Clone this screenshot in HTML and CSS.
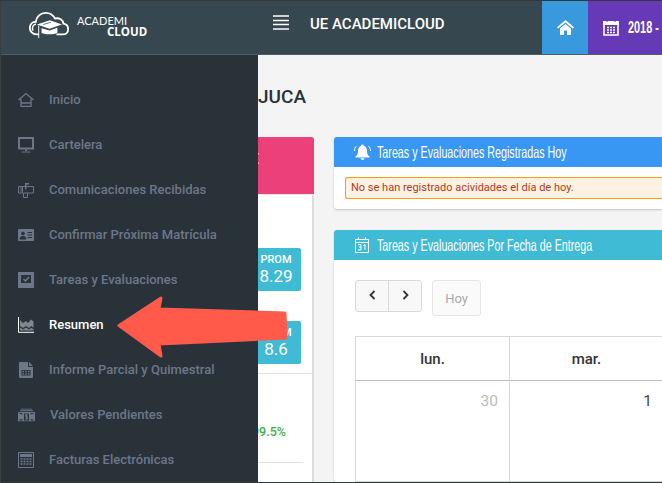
FILE: index.html
```html
<!DOCTYPE html>
<html lang="es">
<head>
    <meta charset="UTF-8">
    <meta name="viewport" content="width=device-width, initial-scale=1.0">
    <title>UE AcademiCloud</title>
    <link rel="stylesheet" href="styles.css">
</head>
<body>
    <div class="app">
        <header class="topbar">
            <div class="brand">
                <svg class="brand-logo" width="42" height="28" viewBox="0 0 44 30">
                    <path d="M11 25H9C4 25 1.500 21.500 1.500 18C1.500 14 4.500 11.500 8 11.500C8.500 6 13 2 18.500 2C23 2 26.500 4.500 28.500 8C33 7 37 9.500 37.500 13.500C40.500 14 42.500 16.500 42.500 19.500C42.500 23 40 25 37 25H30" fill="none" stroke="#fff" stroke-width="2"/>
                    <path d="M5 21C3.500 18 4.500 14.500 8 14" fill="none" stroke="#fff" stroke-width="1.500"/>
                    <path d="M9 14.500L23 10L36 14.500L22.500 19Z" fill="#fff"/>
                    <path d="M14 18.500V23.500C18 25.500 27 25.500 31 23.500V18L22.500 21Z" fill="#fff"/>
                    <path d="M11 15.500V29" stroke="#fff" stroke-width="1"/>
                    <path d="M16 14.500L24 12" stroke="#37474f" stroke-width="0.800"/>
                </svg>
                <div class="brand-text">
                    <span class="brand-top">ACADEMI</span>
                    <span class="brand-bottom">CLOUD</span>
                </div>
            </div>
            <svg class="menu-icon" width="16" height="15" viewBox="0 0 16 15">
                <path d="M0 1H16M0 5.500H16M0 9.500H16M0 14H16" stroke="#fff" stroke-width="1.600"/>
            </svg>
            <div class="school-name">UE ACADEMICLOUD</div>
            <a class="top-btn top-home">
                <svg width="17" height="15" viewBox="0 0 17 15">
                    <path d="M8.500 0L17 7.200L15.800 8.500L8.500 2.400L1.200 8.500L0 7.200Z" fill="#fff"/>
                    <path d="M3 8.500L8.500 4L14 8.500V15H10V10.500H7V15H3Z" fill="#fff"/>
                </svg>
            </a>
            <a class="top-btn top-period">
                <svg width="16" height="17" viewBox="0 0 16 17">
                    <path d="M1 3H15V16H1Z" fill="none" stroke="#fff" stroke-width="1.600"/>
                    <path d="M0 2H16V6H0Z" fill="#fff"/>
                    <path d="M4 0.500V3M12 0.500V3" stroke="#6639b6" stroke-width="1"/>
                    <path d="M4 8.500H6M7 8.500H9M10 8.500H12M4 11H6M7 11H9M10 11H12M4 13.500H6M7 13.500H9M10 13.500H12" stroke="#fff" stroke-width="1.400"/>
                </svg>
                <span class="narrow">2018 -</span>
            </a>
        </header>

        <div class="layout">
            <aside class="sidebar">
                <a class="nav-item">
                    <svg width="16" height="15" viewBox="0 0 16 15"><path d="M0.500 7.500L8 1L15.500 7.500M3 6.500V13.800H13V6.500M3 10.500H13" fill="none" stroke="currentColor" stroke-width="1.300"/></svg>
                    Inicio
                </a>
                <a class="nav-item">
                    <svg width="16" height="16" viewBox="0 0 16 16"><path d="M1 1H15V11.500H1Z" fill="none" stroke="currentColor" stroke-width="2"/><path d="M7 12.500H9V14H7ZM3.500 14.500H12.500V15.500H3.500Z" fill="currentColor"/></svg>
                    Cartelera
                </a>
                <a class="nav-item">
                    <svg width="16" height="16" viewBox="0 0 16 16"><path d="M0.500 4.500H4.500V11H0.500ZM4.500 4.500H15.500V11H5.500M5.500 11V15.500H9.500V11M3 5V10" fill="none" stroke="currentColor" stroke-width="1"/><path d="M7 1H11V2.500H8.500V7.500H7Z" fill="currentColor"/></svg>
                    Comunicaciones Recibidas
                </a>
                <a class="nav-item">
                    <svg width="16" height="12" viewBox="0 0 16 12"><path d="M1 0H15Q16 0 16 1V11Q16 12 15 12H1Q0 12 0 11V1Q0 0 1 0Z" fill="currentColor"/><circle cx="5" cy="4.500" r="1.800" fill="#293239"/><path d="M2 10C2 6.500 8 6.500 8 10ZM9.500 3.500H14M9.500 6H14M9.500 8.500H14" fill="#293239" stroke="#293239" stroke-width="1"/></svg>
                    Confirmar Próxima Matrícula
                </a>
                <a class="nav-item">
                    <svg width="16" height="16" viewBox="0 0 16 16"><path d="M0 0H16V16H0ZM3 3V11H13V3Z" fill="currentColor" fill-rule="evenodd"/><path d="M5.500 7L7.500 9L11 5" fill="none" stroke="currentColor" stroke-width="1.500"/></svg>
                    Tareas y Evaluaciones
                </a>
                <a class="nav-item nav-active">
                    <svg width="16" height="16" viewBox="0 0 16 16"><path d="M2 9V3L5 6L8 4L10 6L13 2.500L15.500 4.500V10.500L13 9L11 11L8 9L5 11Z" fill="#7d8792"/><path d="M2 10.500L5 12.500L8 10.500L11 12.500L13 11L15.500 12V13.500H2Z" fill="#7d8792"/><path d="M0.500 0V15.300H16" fill="none" stroke="#fff" stroke-width="1"/></svg>
                    Resumen
                </a>
                <a class="nav-item">
                    <svg width="16" height="16" viewBox="0 0 16 16"><path d="M1 1Q1 0 2 0H10V5H15V15Q15 16 14 16H2Q1 16 1 15Z" fill="currentColor"/><path d="M11 0L15 4H11Z" fill="currentColor"/><path d="M3.500 8H12.500V13.500H3.500Z" fill="#293239"/><path d="M4.500 9.500H6M7.200 9.500H8.800M10 9.500H11.500M4.500 12H6M7.200 12H8.800M10 12H11.500" stroke="currentColor" stroke-width="1.400"/></svg>
                    Informe Parcial y Quimestral
                </a>
                <a class="nav-item">
                    <svg width="17" height="13" viewBox="0 0 17 13"><path d="M3 0.500H14M2 2.200H15" stroke="currentColor" stroke-width="1"/><path d="M0 3.500H17V13H0Z" fill="currentColor"/><path d="M1.500 5H4V6M15.500 5H13V6M1.500 11.500H4V10.500M15.500 11.500H13V10.500" fill="none" stroke="#293239" stroke-width="1"/><path d="M6 5H11V12H6Z" fill="#293239"/><path d="M10 6.300H7.500V8.200H9.500V10.300H7M8.500 5.500V11.200" fill="none" stroke="currentColor" stroke-width="0.900"/></svg>
                    <span class="nav-offset">Valores Pendientes</span>
                </a>
                <a class="nav-item">
                    <svg width="16" height="16" viewBox="0 0 16 16"><path d="M0.500 0.500H15.500V15.500H0.500Z" fill="none" stroke="currentColor" stroke-width="1"/><path d="M2 2H14V5H2Z" fill="currentColor"/><path d="M2.500 7H4.500M5.500 7H7.500M8.500 7H10.500M11.500 7H13.500M2.500 9.500H4.500M5.500 9.500H7.500M8.500 9.500H10.500M11.500 9.500H13.500M2.500 12H4.500M5.500 12H7.500M8.500 12H10.500M11.500 12H13.500" stroke="currentColor" stroke-width="1.600"/></svg>
                    Facturas Electrónicas
                </a>
            </aside>

            <main class="content">
                <h2 class="page-title">JUCA</h2>
                <div class="columns">
                    <section class="student-card">
                        <div class="student-head"><span>E</span></div>
                        <div class="student-body">
                            <div class="tile">
                                <span class="tile-label">PROM</span>
                                <span class="tile-value">8.29</span>
                            </div>
                            <div class="tile">
                                <span class="tile-label">PROM</span>
                                <span class="tile-value">8.6</span>
                            </div>
                            <div class="student-stat"><span>99.5%</span></div>
                        </div>
                    </section>

                    <div class="panels">
                        <section class="panel">
                            <div class="panel-head head-blue">
                                <svg width="17" height="16" viewBox="0 0 17 16">
                                    <path d="M8.500 0.500C9.300 0.500 9.800 1 9.800 1.800C12 2.500 13 4.500 13 7C13 10 14 11.500 15.500 12.500V13.500H1.500V12.500C3 11.500 4 10 4 7C4 4.500 5 2.500 7.200 1.800C7.200 1 7.700 0.500 8.500 0.500Z" fill="#fff"/>
                                    <path d="M6.500 14.300H10.500C10.300 15.300 9.500 16 8.500 16C7.500 16 6.700 15.300 6.500 14.300Z" fill="#fff"/>
                                    <path d="M2.500 2C1 3.500 0.500 5 0.500 7M14.500 2C16 3.500 16.500 5 16.500 7" fill="none" stroke="#fff" stroke-width="1"/>
                                </svg>
                                <span class="narrow">Tareas y Evaluaciones Registradas Hoy</span>
                            </div>
                            <div class="panel-body">
                                <div class="alert">No se han registrado acividades el día de hoy.</div>
                            </div>
                        </section>

                        <section class="panel">
                            <div class="panel-head head-teal">
                                <svg class="teal-icon" width="14" height="16" viewBox="0 0 14 16">
                                    <path d="M0.500 2.500H13.500V15.500H0.500ZM0.500 5.500H13.500M3.500 0.500V3M10.500 0.500V3" fill="none" stroke="#fff" stroke-width="1"/>
                                    <path d="M3 7.500H6V10H4M6 10V13H3M8.500 8.500L10 7.500V13" fill="none" stroke="#fff" stroke-width="1"/>
                                </svg>
                                <span class="narrow">Tareas y Evaluaciones Por Fecha de Entrega</span>
                            </div>
                            <div class="calendar">
                                <div class="cal-toolbar">
                                    <div class="cal-nav">
                                        <button class="cal-btn">
                                            <svg width="7" height="10" viewBox="0 0 7 10"><path d="M5.500 1L1.500 5L5.500 9" fill="none" stroke="#333" stroke-width="1.800"/></svg>
                                        </button>
                                        <button class="cal-btn">
                                            <svg width="7" height="10" viewBox="0 0 7 10"><path d="M1.500 1L5.500 5L1.500 9" fill="none" stroke="#333" stroke-width="1.800"/></svg>
                                        </button>
                                    </div>
                                    <button class="cal-today">Hoy</button>
                                </div>
                                <div class="cal-grid">
                                    <div class="cal-day">lun.</div>
                                    <div class="cal-day">mar.</div>
                                    <div class="cal-cell cal-muted">30</div>
                                    <div class="cal-cell">1</div>
                                </div>
                            </div>
                        </section>
                    </div>
                </div>
            </main>
        </div>

        <svg class="arrow" width="176" height="64" viewBox="0 0 176 64">
            <path d="M2 29.500L44 2L42 13L168 17L169 42L42 48L44 60Z" fill="#ff5a4a" stroke="#ff5a4a" stroke-width="3" stroke-linejoin="round"/>
        </svg>
    </div>
</body>
</html>
```

FILE: styles.css
```css
* {
    box-sizing: border-box;
}

html, body {
    margin: 0;
    padding: 0;
    height: 100%;
    overflow: hidden;
}

body {
    font-family: Roboto, 'Liberation Sans', sans-serif;
    background-color: #f4f4f4;
}

.app {
    position: relative;
    display: flex;
    flex-direction: column;
    width: 662px;
    height: 483px;
    overflow: hidden;
    border-top: 1px solid #33383b;
    border-bottom: 1px solid #33383b;
    border-left: 1px solid #3a3f42;
}

/* letra condensada de los titulos */
.narrow {
    display: inline-block;
    flex: none;
    font-family: 'Liberation Sans', sans-serif;
    transform: scaleX(0.65);
    transform-origin: left center;
    white-space: nowrap;
}

/* barra superior */
.topbar {
    display: flex;
    align-items: center;
    flex: 0 0 54px;
    background-color: #37474f;
    border-bottom: 1px solid #4d5d65;
    color: #fff;
}

.brand {
    display: flex;
    align-items: flex-start;
    width: 272px;
    height: 100%;
    padding: 10px 0 0 27px;
}

.brand-logo {
    flex: none;
}

.brand-text {
    display: flex;
    flex-direction: column;
    margin: 4px 0 0 7px;
    line-height: 11px;
}

.brand-top {
    font-family: Lato, sans-serif;
    font-size: 11px;
}

.brand-bottom {
    margin-left: 30px;
    font-family: 'Open Sans', sans-serif;
    font-size: 11.500px;
    font-weight: 700;
}

.menu-icon {
    flex: none;
    margin-top: -10px;
}

.school-name {
    flex: 1;
    margin: -8px 0 0 21px;
    font-size: 15px;
    font-weight: 500;
}

.top-btn {
    display: flex;
    align-items: center;
    height: 53px;
}

.top-home {
    justify-content: center;
    width: 46px;
    background-color: #3899dc;
}

.top-period {
    gap: 9px;
    width: 74px;
    padding-left: 15px;
    background-color: #6639b6;
    font-size: 16px;
    font-weight: 700;
}

.top-period svg {
    flex: none;
}

.top-period .narrow {
    font-weight: 700;
    transform: scaleX(0.68);
}

/* menu lateral */
.layout {
    display: flex;
    flex: 1;
    min-height: 0;
}

.sidebar {
    flex: 0 0 257px;
    padding-top: 22px;
    background-color: #293239;
}

.nav-item {
    display: flex;
    align-items: center;
    position: relative;
    height: 45px;
    padding-left: 48px;
    color: #6d778a;
    font-size: 13px;
    font-weight: 500;
    white-space: nowrap;
}

.nav-item svg {
    position: absolute;
    left: 17px;
    top: 50%;
    transform: translateY(-50%);
}

.nav-active {
    color: #fff;
}

.nav-offset {
    margin-left: 1px;
}

/* contenido */
.content {
    flex: 1;
    min-width: 0;
    overflow: hidden;
}

.page-title {
    display: flex;
    align-items: center;
    height: 82px;
    margin: 0;
    color: #263238;
    font-size: 19px;
    font-weight: 500;
}

.columns {
    display: flex;
    gap: 20px;
}

.student-card {
    flex: 0 0 56px;
    min-width: 0;
    border-radius: 0 3px 0 0;
}

.student-head {
    height: 57px;
    padding-top: 14px;
    overflow: hidden;
    background-color: #ec407a;
    border-radius: 0 3px 0 0;
    color: #fff;
    font-size: 14px;
    font-weight: 500;
}

.student-head span {
    margin-left: -7px;
}

.student-body {
    height: 288px;
    padding-top: 53px;
    overflow: hidden;
    background-color: #fff;
    border-right: 2px solid #dcdcdc;
    border-top: 1px solid #e8e8e8;
}

.tile {
    display: flex;
    flex-direction: column;
    align-items: center;
    justify-content: center;
    width: 50px;
    height: 43px;
    margin: 0 0 30px -7px;
    background-color: #40bbd5;
    border-radius: 2px;
    color: #fff;
}

.tile-label {
    font-size: 11px;
    font-weight: 500;
    line-height: 12px;
}

.tile-value {
    font-size: 17px;
    line-height: 20px;
}

.student-stat {
    display: flex;
    justify-content: flex-end;
    position: relative;
    width: 100%;
    height: 90px;
    margin-top: -21px;
    padding: 50px 26px 0 0;
    border-top: 1px solid #e2e2e2;
    color: #3fae49;
    font-size: 12.500px;
    font-weight: 500;
    white-space: nowrap;
}

.student-stat::after {
    content: "";
    position: absolute;
    left: 0;
    right: 9px;
    bottom: 0;
    height: 1px;
    background-color: #e2e2e2;
}

.panels {
    flex: 1;
    min-width: 0;
}

.panel {
    margin-bottom: 21px;
    background-color: #fff;
    border-radius: 3px 0 0 3px;
    box-shadow: 0 1px 2px rgba(0, 0, 0, 0.2);
}

.panel-head {
    display: flex;
    align-items: center;
    gap: 6px;
    height: 30px;
    padding-left: 20px;
    border-radius: 3px 0 0 0;
    color: #fff;
    font-size: 16.500px;
}

.panel-head svg {
    flex: none;
}

.teal-icon {
    margin: 0 2px 0 1px;
}

.head-blue {
    background-color: #3897f2;
}

.head-teal {
    background-color: #40bbd5;
}

.panel-body {
    height: 42px;
    padding: 10px 0 0 11px;
}

.alert {
    height: 22px;
    padding-left: 5px;
    background-color: #fff2e3;
    border: 1px solid #f59c1a;
    border-right: none;
    border-radius: 3px 0 0 3px;
    color: #b23a1c;
    font-size: 11px;
    line-height: 20px;
    white-space: nowrap;
}

.calendar {
    padding: 20px 0 0 21px;
}

.cal-toolbar {
    display: flex;
    align-items: flex-start;
    gap: 10px;
    height: 56px;
}

.cal-nav {
    display: flex;
    width: 67px;
    height: 32px;
    background-color: #f8f8f8;
    border: 1px solid #d8d8d8;
    border-radius: 3px;
}

.cal-btn {
    flex: 1;
    padding: 0 0 2px;
    background: none;
    border: none;
}

.cal-btn + .cal-btn {
    border-left: 1px solid #d8d8d8;
}

.cal-today {
    width: 49px;
    height: 36px;
    padding: 0;
    background-color: #fafafa;
    border: 1px solid #e6e6e6;
    border-radius: 3px;
    color: #aaa;
    font-family: Roboto, sans-serif;
    font-size: 13px;
}

.cal-grid {
    display: grid;
    grid-template-columns: 154px 154px;
    grid-template-rows: 44px 101px;
    border-top: 1px solid #d8d8d8;
    border-left: 1px solid #d8d8d8;
}

.cal-day {
    display: flex;
    align-items: center;
    justify-content: center;
    border-right: 1px solid #d8d8d8;
    border-bottom: 1px solid #bdbdbd;
    color: #333;
    font-size: 15px;
    font-weight: 500;
}

.cal-cell {
    padding: 11px 11px 0 0;
    border-right: 1px solid #d8d8d8;
    border-bottom: 1px solid #d8d8d8;
    color: #444;
    font-size: 15.500px;
    text-align: right;
}

.cal-muted {
    color: #bbb;
}

/* flecha encima de todo */
.arrow {
    position: absolute;
    left: 116px;
    top: 295px;
}
```
